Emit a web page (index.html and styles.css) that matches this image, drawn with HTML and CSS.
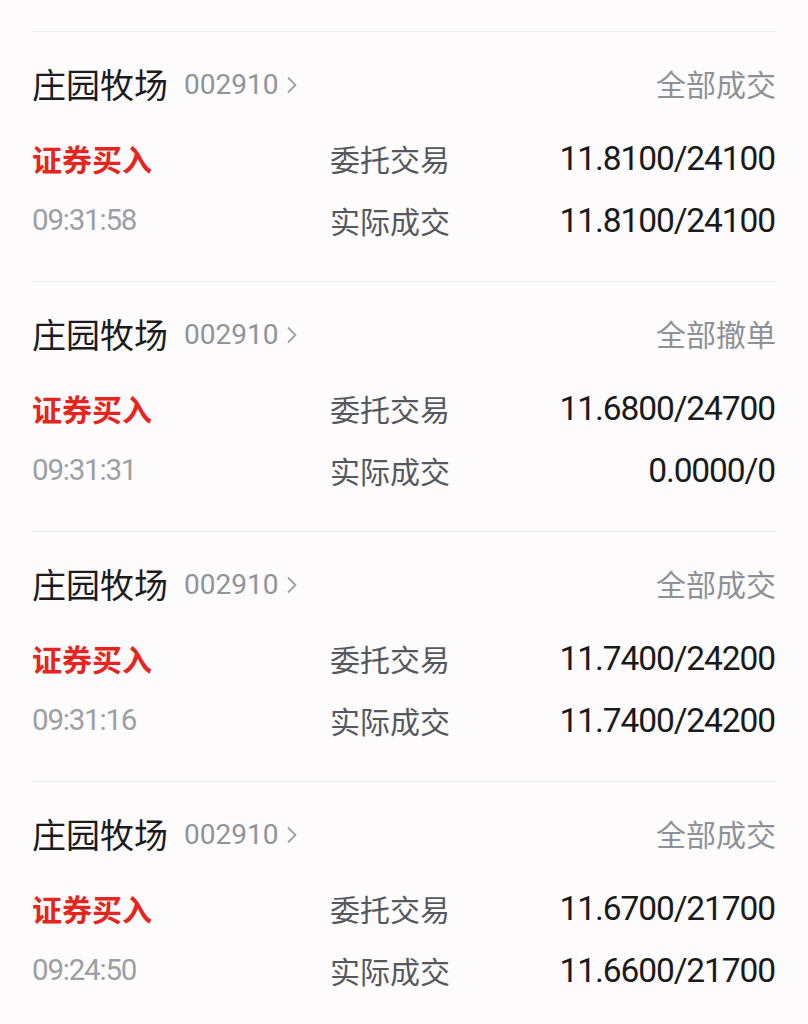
FILE: index.html
```html
<!DOCTYPE html>
<html lang="zh-CN">
  <head>
    <meta charset="UTF-8" />
    <meta name="viewport" content="width=device-width, initial-scale=1.0" />
    <title>委托记录</title>
    <link rel="stylesheet" href="styles.css">
  </head>
  <body>
    <div class="order-list">
      <div class="order">
        <div class="order-head">
          <div class="stock">
            <span class="stock-name">庄园牧场</span>
            <span class="stock-code">002910</span>
            <svg class="chevron" viewBox="0 0 10 18" width="10" height="18">
              <polyline points="1,1.5 8.5,9 1,16.5" />
            </svg>
          </div>
          <span class="order-status">全部成交</span>
        </div>
        <div class="order-row">
          <span class="order-type">证券买入</span>
          <span class="row-label">委托交易</span>
          <span class="row-value">11.8100/24100</span>
        </div>
        <div class="order-row">
          <span class="order-time">09:31:58</span>
          <span class="row-label">实际成交</span>
          <span class="row-value">11.8100/24100</span>
        </div>
      </div>

      <div class="order">
        <div class="order-head">
          <div class="stock">
            <span class="stock-name">庄园牧场</span>
            <span class="stock-code">002910</span>
            <svg class="chevron" viewBox="0 0 10 18" width="10" height="18">
              <polyline points="1,1.5 8.5,9 1,16.5" />
            </svg>
          </div>
          <span class="order-status">全部撤单</span>
        </div>
        <div class="order-row">
          <span class="order-type">证券买入</span>
          <span class="row-label">委托交易</span>
          <span class="row-value">11.6800/24700</span>
        </div>
        <div class="order-row">
          <span class="order-time">09:31:31</span>
          <span class="row-label">实际成交</span>
          <span class="row-value">0.0000/0</span>
        </div>
      </div>

      <div class="order">
        <div class="order-head">
          <div class="stock">
            <span class="stock-name">庄园牧场</span>
            <span class="stock-code">002910</span>
            <svg class="chevron" viewBox="0 0 10 18" width="10" height="18">
              <polyline points="1,1.5 8.5,9 1,16.5" />
            </svg>
          </div>
          <span class="order-status">全部成交</span>
        </div>
        <div class="order-row">
          <span class="order-type">证券买入</span>
          <span class="row-label">委托交易</span>
          <span class="row-value">11.7400/24200</span>
        </div>
        <div class="order-row">
          <span class="order-time">09:31:16</span>
          <span class="row-label">实际成交</span>
          <span class="row-value">11.7400/24200</span>
        </div>
      </div>

      <div class="order">
        <div class="order-head">
          <div class="stock">
            <span class="stock-name">庄园牧场</span>
            <span class="stock-code">002910</span>
            <svg class="chevron" viewBox="0 0 10 18" width="10" height="18">
              <polyline points="1,1.5 8.5,9 1,16.5" />
            </svg>
          </div>
          <span class="order-status">全部成交</span>
        </div>
        <div class="order-row">
          <span class="order-type">证券买入</span>
          <span class="row-label">委托交易</span>
          <span class="row-value">11.6700/21700</span>
        </div>
        <div class="order-row">
          <span class="order-time">09:24:50</span>
          <span class="row-label">实际成交</span>
          <span class="row-value">11.6600/21700</span>
        </div>
      </div>
    </div>
  </body>
</html>
```

FILE: styles.css
```css
* {
  margin: 0;
  padding: 0;
  box-sizing: border-box;
}

body {
  font-family: Roboto, "Noto Sans CJK SC", sans-serif;
  background: #fdfbfb;
  color: #1c1c1c;
}

.order-list {
  padding: 31px 32px 0;
}

.order {
  border-top: 1px solid #efeded;
  padding: 29px 0 39px;
}

.order-head {
  display: flex;
  justify-content: space-between;
  align-items: center;
  height: 44px;
  margin-bottom: 31px;
}

.stock {
  display: flex;
  align-items: center;
}

.stock-name {
  font-size: 34px;
  color: #1c1c1c;
}

.stock-code {
  font-size: 28px;
  color: #8f949b;
  margin-left: 16px;
  margin-top: 2px;
}

.chevron {
  margin-left: 9px;
  margin-top: 4px;
  fill: none;
  stroke: #9ca0a6;
  stroke-width: 1.8;
}

.order-status {
  font-size: 30px;
  color: #8d9198;
}

.order-row {
  display: grid;
  grid-template-columns: 298px auto 1fr;
  align-items: center;
  height: 44px;
}

.order-row + .order-row {
  margin-top: 18px;
}

.order-type {
  font-size: 30px;
  font-weight: 600;
  color: #e52520;
}

.order-time {
  font-size: 29.5px;
  letter-spacing: -1.2px;
  color: #9ca0a6;
}

.row-label {
  font-size: 30px;
  color: #55595f;
}

.row-value {
  font-size: 33.5px;
  letter-spacing: -1.1px;
  color: #1a1a1a;
  text-align: right;
  margin-right: 1px;
}
```
